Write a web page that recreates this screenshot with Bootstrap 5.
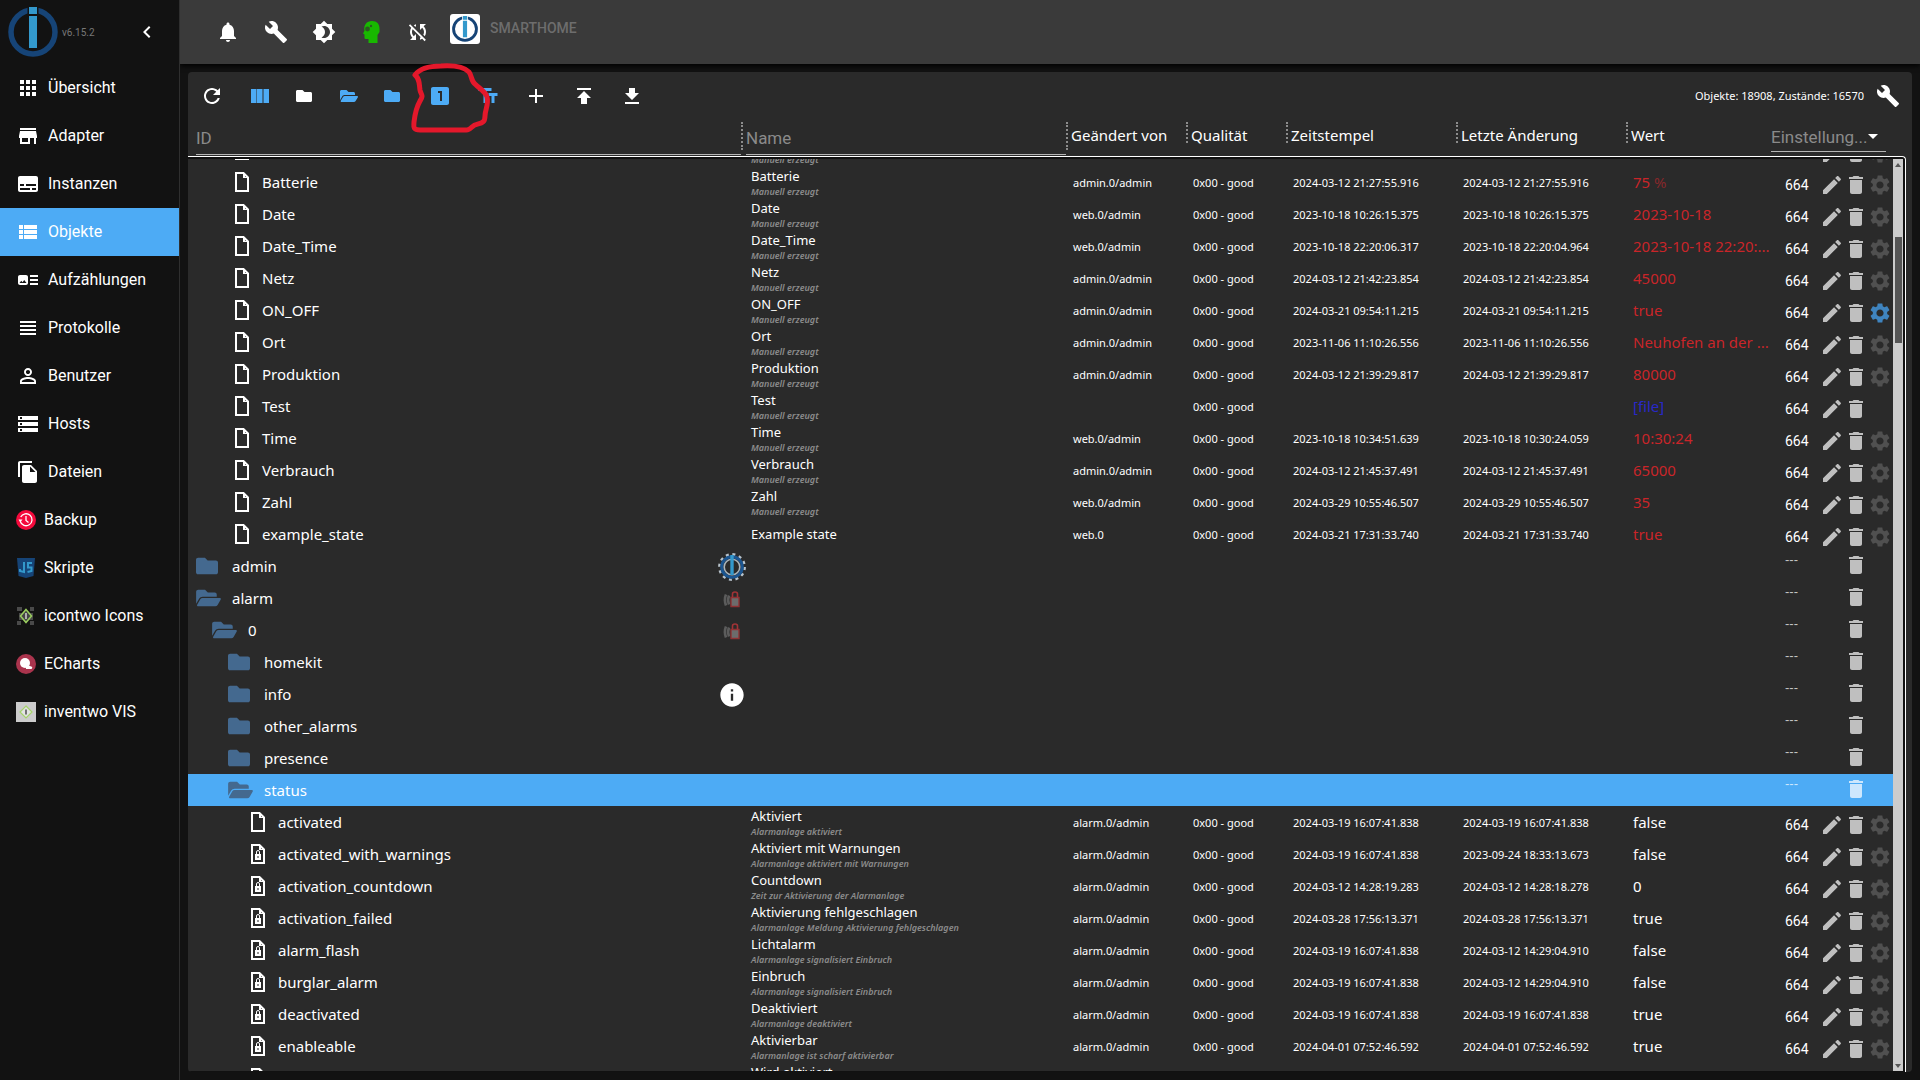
<!DOCTYPE html>
<html lang="de" data-bs-theme="dark">
<head>
<meta charset="utf-8">
<meta name="viewport" content="width=device-width, initial-scale=1">
<title>Objekte - ioBroker</title>
<link href="https://cdn.jsdelivr.net/npm/bootstrap@5.3.0/dist/css/bootstrap.min.css" rel="stylesheet">
<style>
  :root { --accent: #4dabf5; --panel: #2a2a2a; --page: #121212; --dir: #44698f; }
  body { background: var(--page); color: #fff; font-family: Roboto, sans-serif; font-size: 16px; }
  svg { display: block; fill: currentColor; flex: none; }
  .ic { width: 24px; height: 24px; }
  .side { width: 180px; border-right: 1px solid #2f2f2f; }
  .side-head { height: 64px; padding: 0 20px 0 8px; }
  .version { font-size: 10px; color: #777; }
  .side-link { height: 48px; padding: 0 16px; gap: 8px; color: #fff; text-decoration: none; }
  .side-link.active { background: var(--accent); }
  .side-link:hover { color: #fff; }
  .topbar { height: 64px; padding-left: 24px; background: #3a3a3a; box-shadow: 0 2px 5px #000; }
  .tool { width: 48px; height: 48px; padding: 12px; border: 0; border-radius: 50%; background: none; color: #fff; }
  .tool-s { width: 44px; }
  .tool-sync { width: 44px; padding: 12px 10px; }
  .on { color: var(--accent); }
  .host { color: #6d6d6d; font-size: 14px; font-weight: 500; }
  .avatar { background: #fff; border-radius: 3px; margin: 0 10px 6px 10px; padding: 2px; }
  .panel { background: var(--panel); border-radius: 4px; }
  .counts, .grid { font-family: "Noto Sans", sans-serif; }
  .counts { font-size: 11px; }
  .grid { table-layout: fixed; color: #fff; --bs-table-bg: transparent; --bs-table-color: #fff; line-height: 20px; }
  .grid td, .grid th { height: 32px; padding: 0; vertical-align: middle; white-space: nowrap; overflow: hidden; font-weight: 400; }
  .grid-head { width: auto; margin-right: 19px; }
  .grid-head th { height: 36px; vertical-align: top; font-size: 15px; }
  .grid-head th:first-child { padding-left: 8px; }
  .c-id { width: 558px; } .c-by { width: 120px; } .c-q { width: 100px; } .c-t { width: 170px; } .c-v { width: 140px; } .c-s { width: 122px; }
  .grip { width: 2px; height: 21px; margin: 2px 3px 0 0; border-left: 2px dotted #8c8c8c; }
  .grip-l { height: 28px; }
  .cap { display: block; height: 30px; line-height: 30px; }
  .filter { height: 35px; padding: 1px 0 0; border: 0; border-bottom: 1px solid #b5b5b5; border-radius: 0; background: none; color: #fff; font: 17px Roboto, sans-serif; width: 100%; }
  .filter::placeholder { color: #8a8a8a; opacity: 1; }
  .pick { height: 32px; width: 115px; padding: 2px 14px 0 0; border: 0; border-bottom: 1px solid #b5b5b5; border-radius: 0; appearance: none; background: none; color: #8a8a8a; font: 17px Roboto, sans-serif; }
  .pick-arrow { right: 8px; top: 4px; pointer-events: none; }
  .pane { border-top: 1px solid #fff; border-right: 1px solid #fff; border-top-right-radius: 4px; margin-right: 6px; padding: 2px 2px 1px 0; background: #111; }
  .rows { background: var(--panel); overflow: hidden; }
  .bar { width: 10px; background: #ccc; color: #555; padding: 4px 0 3px; }
  .thumb { width: 7px; height: 106px; margin-top: 70px; background: #555; }
  .node { font-size: 15px; }
  .fold { width: 24px; margin-right: 12px; color: var(--dir); }
  .leaf { width: 22px; padding-left: 6px; margin-right: 12px; }
  .badge-ic { width: 28px; padding-top: 1px; }
  .nm { padding-left: 5px; font-size: 13px; line-height: 18px; }
  .nm small { display: block; font-size: 9px; font-style: italic; font-weight: 600; line-height: 14px; color: #8c8c8c; }
  .nm-two { padding-top: 2px; height: 32px; line-height: 17px; }
  .grid td.meta { padding: 1px 0 0 2px; font-size: 11px; }
  .grid td.val { padding-left: 2px; font-size: 15px; }
  .unack { color: #c92529; } .unit { color: #86282b; } .isfile { color: #2828c8; }
  .acts { padding-left: 14px; color: #bfbfbf; }
  .folder .acts { padding-bottom: 2px; }
  .acl { width: 35px; font: 14px/24px Roboto, sans-serif; color: #fff; }
  .acl-none { font: 13px/14px "Liberation Sans", sans-serif; color: #c4c4c4; height: 24px; }
  .act { width: 24px; height: 24px; padding: 0; border: 0; background: none; color: inherit; }
  .state .acts { padding-top: 6px; }
  .dim { color: #505050; } .set { color: #3f84bf; }
  .sel > td { background: var(--accent) !important; }
  .sel .acts, .sel .acl-none { color: #cde7fd; }
  .mark-up { left: 405px; top: 55px; pointer-events: none; }
</style>
<script src="https://cdn.jsdelivr.net/npm/bootstrap@5.3.0/dist/js/bootstrap.bundle.min.js"></script>
</head>
<body class="vh-100 overflow-hidden d-flex position-relative">
<svg class="d-none">
  <symbol id="bell" viewBox="0 0 24 24"><path d="M12 22c1.1 0 2-.9 2-2h-4c0 1.1.89 2 2 2zm6-6v-5c0-3.07-1.64-5.64-4.5-6.32V4c0-.83-.67-1.5-1.5-1.5s-1.5.67-1.5 1.5v.68C7.63 5.36 6 7.92 6 11v5l-2 2v1h16v-1l-2-2z"/></symbol>
  <symbol id="build" viewBox="0 0 24 24"><path d="M22.7 19l-9.1-9.1c.9-2.3.4-5-1.5-6.9-2-2-5-2.4-7.4-1.3L9 6 6 9 1.6 4.7C.4 7.1.9 10.1 2.9 12.1c1.9 1.9 4.6 2.4 6.9 1.5l9.1 9.1c.4.4 1 .4 1.4 0l2.3-2.3c.5-.4.5-1.1.1-1.4z"/></symbol>
  <symbol id="bright" viewBox="0 0 24 24"><path d="M20 8.69V4h-4.69L12 .69 8.69 4H4v4.69L.69 12 4 15.31V20h4.69L12 23.31 15.31 20H20v-4.69L23.31 12 20 8.69zM12 18c-.89 0-1.74-.2-2.5-.55C11.56 16.5 13 14.42 13 12s-1.44-4.5-3.5-5.45C10.26 6.2 11.11 6 12 6c3.31 0 6 2.69 6 6s-2.69 6-6 6z"/></symbol>
  <symbol id="head" viewBox="0 0 24 24"><path fill="#18b800" d="M12 1c5 0 7.500 3 7.500 7.500V12l-2 3v8h-9v-4H5.500c-.8 0-1-.5-1-1.200V14.500L3 13.500l1.500-2.700C3.500 5 6.500 1 12 1z"/><circle cx="7.500" cy="9" r="2.400" fill="#2b5b20"/><circle cx="11" cy="6" r="1.200" fill="#2b5b20"/></symbol>
  <symbol id="syncoff" viewBox="0 0 24 24"><path d="M10 6.35V4.26c-.8.21-1.55.54-2.230.96l1.460 1.460c.25-.12.5-.24.770-.33zm-7.140-.94l2.360 2.360C4.450 8.990 4 10.440 4 12c0 2.210.910 4.200 2.360 5.640L4 20h6v-6l-2.240 2.240C6.680 15.150 6 13.660 6 12c0-1 .25-1.940.680-2.770l8.080 8.080c-.25.130-.5.250-.770.340v2.090c.8-.210 1.550-.540 2.230-.960l2.360 2.360 1.270-1.270L4.140 4.140 2.860 5.410zM20 4h-6v6l2.240-2.240C17.320 8.850 18 10.340 18 12c0 1-.25 1.940-.680 2.770l1.460 1.460C19.550 15.010 20 13.560 20 12c0-2.210-.910-4.200-2.360-5.640L20 4z"/></symbol>
  <symbol id="logo" viewBox="0 0 50 50"><circle cx="25" cy="25" r="22" fill="none" stroke="#164477" stroke-width="5.500"/><path fill="var(--gap, #121212)" d="M19.500 0h11v9h-11z"/><path fill="#3399cc" d="M21 0h8v7h-8zM21 9h8v32h-8z"/></symbol>
  <symbol id="left" viewBox="0 0 24 24"><path d="M15.410 7.410L14 6l-6 6 6 6 1.410-1.410L10.830 12z"/></symbol>
  <symbol id="apps" viewBox="0 0 24 24"><path d="M4 8h4V4H4v4zm6 12h4v-4h-4v4zm-6 0h4v-4H4v4zm0-6h4v-4H4v4zm6 0h4v-4h-4v4zm6-10v4h4V4h-4zm-6 4h4V4h-4v4zm6 6h4v-4h-4v4zm0 6h4v-4h-4v4z"/></symbol>
  <symbol id="store" viewBox="0 0 24 24"><path d="M20 4H4v2h16V4zm1 10v-2l-1-5H4l-1 5v2h1v6h10v-6h4v6h2v-6h1zm-9 4H6v-4h6v4z"/></symbol>
  <symbol id="inst" viewBox="0 0 24 24"><path d="M20 4H4c-1.100 0-2 .9-2 2v12c0 1.100.9 2 2 2h16c1.100 0 2-.9 2-2V6c0-1.100-.9-2-2-2zM4 12h4v2H4v-2zm10 6H4v-2h10v2zm6 0h-4v-2h4v2zm0-4H10v-2h10v2z"/></symbol>
  <symbol id="list" viewBox="0 0 24 24"><path d="M3 14h4v-4H3v4zm0 5h4v-4H3v4zM3 9h4V5H3v4zm5 5h13v-4H8v4zm0 5h13v-4H8v4zM8 5v4h13V5H8z"/></symbol>
  <symbol id="track" viewBox="0 0 24 24"><path d="M22 13h-8v-2h8v2zm0-6h-8v2h8V7zm-8 10h8v-2h-8v2zm-2-8v6c0 1.100-.9 2-2 2H4c-1.100 0-2-.9-2-2V9c0-1.100.9-2 2-2h6c1.100 0 2 .9 2 2zm-1.500 6l-2.250-3-1.750 2.260-1.250-1.510L3.500 15h7z"/></symbol>
  <symbol id="lines" viewBox="0 0 24 24"><path d="M4 15h16v-2H4v2zm0 4h16v-2H4v2zm0-8h16V9H4v2zm0-6v2h16V5H4z"/></symbol>
  <symbol id="person" viewBox="0 0 24 24"><path d="M12 5.900c1.160 0 2.100.94 2.100 2.100s-.94 2.100-2.100 2.100S9.900 9.160 9.900 8s.94-2.100 2.100-2.100m0 9c2.970 0 6.100 1.460 6.100 2.100v1.100H5.900V17c0-.64 3.130-2.100 6.100-2.100M12 4C9.790 4 8 5.790 8 8s1.790 4 4 4 4-1.790 4-4-1.790-4-4-4zm0 9c-2.670 0-8 1.340-8 4v3h16v-3c0-2.660-5.330-4-8-4z"/></symbol>
  <symbol id="hosts" viewBox="0 0 24 24"><path d="M2 20h20v-4H2v4zm2-3h2v2H4v-2zM2 4v4h20V4H2zm4 3H4V5h2v2zm-4 7h20v-4H2v4zm2-3h2v2H4v-2z"/></symbol>
  <symbol id="files" viewBox="0 0 24 24"><path d="M16 1H4c-1.100 0-2 .9-2 2v14h2V3h12V1zm-1 4l6 6v10c0 1.100-.9 2-2 2H7.990C6.890 23 6 22.100 6 21l.01-14c0-1.100.89-2 1.990-2h7zm-1 7h5.500L14 6.500V12z"/></symbol>
  <symbol id="refresh" viewBox="0 0 24 24"><path d="M17.650 6.350C16.200 4.900 14.210 4 12 4c-4.420 0-7.990 3.580-7.990 8s3.570 8 7.990 8c3.730 0 6.840-2.550 7.730-6h-2.080c-.82 2.330-3.040 4-5.650 4-3.310 0-6-2.690-6-6s2.690-6 6-6c1.660 0 3.140.69 4.220 1.780L13 11h7V4l-2.350 2.350z"/></symbol>
  <symbol id="cols" viewBox="0 0 24 24"><path opacity=".5" d="M3 5h18v14H3z"/><path d="M3 5h5v14H3zM9 5h5v14H9zM16 5h5v14h-5z"/></symbol>
  <symbol id="one" viewBox="0 0 24 24"><path d="M19 3H5c-1.100 0-2 .9-2 2v14c0 1.100.9 2 2 2h14c1.100 0 2-.9 2-2V5c0-1.100-.9-2-2-2zm-5 14h-2V9h-2V7h4v10z"/></symbol>
  <symbol id="textf" viewBox="0 0 24 24"><path d="M2.500 4v3h5v12h3V7h5V4h-13zm19 5h-9v3h3v7h3v-7h3V9z"/></symbol>
  <symbol id="plus" viewBox="0 0 24 24"><path d="M19 13h-6v6h-2v-6H5v-2h6V5h2v6h6v2z"/></symbol>
  <symbol id="up" viewBox="0 0 24 24"><path d="M5 4v2h14V4H5zm0 10h4v6h6v-6h4l-7-7-7 7z"/></symbol>
  <symbol id="down" viewBox="0 0 24 24"><path d="M19 9h-4V4H9v5H5l7 7 7-7zM5 18v2h14v-2H5z"/></symbol>
  <symbol id="dir" viewBox="0 0 512 512"><path d="M464 128H272l-64-64H48C21.500 64 0 85.500 0 112v288c0 26.500 21.500 48 48 48h416c26.500 0 48-21.500 48-48V176c0-26.500-21.500-48-48-48z"/></symbol>
  <symbol id="diropen" viewBox="0 0 576 512"><path d="M572.694 292.093L500.270 416.248A63.997 63.997 0 0 1 444.989 448H45.025c-18.523 0-30.064-20.093-20.731-36.093l72.424-124.155A64 64 0 0 1 152 256h399.964c18.523 0 30.064 20.093 20.730 36.093zM152 224h328v-48c0-26.510-21.490-48-48-48H272l-64-64H48C21.490 64 0 85.490 0 112v278.046l69.077-118.418C86.214 242.250 117.989 224 152 224z"/></symbol>
  <symbol id="edit" viewBox="0 0 24 24"><path d="M3 17.250V21h3.750L17.810 9.940l-3.750-3.750L3 17.250zM20.710 7.040c.39-.39.39-1.020 0-1.410l-2.340-2.340c-.39-.39-1.020-.39-1.410 0l-1.830 1.830 3.750 3.750 1.830-1.830z"/></symbol>
  <symbol id="trash" viewBox="0 0 24 24"><path d="M6 19c0 1.100.9 2 2 2h8c1.100 0 2-.9 2-2V7H6v12zM19 4h-3.500l-1-1h-5l-1 1H5v2h14V4z"/></symbol>
  <symbol id="gear" viewBox="0 0 24 24"><path d="M19.140 12.940c.04-.3.06-.61.06-.94 0-.32-.02-.64-.07-.94l2.030-1.580c.18-.14.23-.41.12-.61l-1.920-3.320c-.12-.22-.37-.29-.59-.22l-2.390.96c-.5-.38-1.030-.7-1.620-.94l-.36-2.540c-.04-.24-.24-.41-.48-.41h-3.840c-.24 0-.43.17-.47.41l-.36 2.540c-.59.24-1.130.57-1.620.94l-2.390-.96c-.22-.08-.47 0-.59.22L2.740 8.870c-.12.21-.08.47.12.61l2.030 1.580c-.05.3-.09.63-.09.94s.02.64.07.94l-2.030 1.580c-.18.14-.23.41-.12.61l1.920 3.320c.12.22.37.29.59.22l2.390-.96c.5.38 1.030.7 1.620.94l.36 2.540c.05.24.24.41.48.41h3.840c.24 0 .44-.17.47-.41l.36-2.540c.59-.24 1.130-.56 1.620-.94l2.390.96c.22.08.47 0 .59-.22l1.920-3.320c.12-.22.07-.47-.12-.61l-2.010-1.580zM12 15.600c-1.980 0-3.600-1.620-3.600-3.600s1.620-3.600 3.600-3.600 3.600 1.620 3.600 3.600-1.620 3.600-3.600 3.600z"/></symbol>
  <symbol id="leaf" viewBox="0 0 16 20"><path fill="none" stroke="currentColor" stroke-width="2" d="M2 1h7.500L14 5.500V19H2z"/><path d="M9 1v5h5V5h-3V2z"/></symbol>
  <symbol id="leaflock" viewBox="0 0 16 20"><path fill="none" stroke="currentColor" stroke-width="2" d="M2 1h7.500L14 5.500V19H2z"/><path d="M9 1v5h5V5h-3V2z"/><path d="M5 10h6v6H5z"/><path fill="none" stroke="currentColor" d="M6.500 10V8a1.500 1.500 0 0 1 3 0v2"/><path fill="#2a2a2a" d="M7.500 12h1v2h-1z"/></symbol>
  <symbol id="info" viewBox="0 0 24 24"><path d="M12 2C6.480 2 2 6.480 2 12s4.480 10 10 10 10-4.480 10-10S17.520 2 12 2zm1 15h-2v-6h2v6zm0-8h-2V7h2v2z"/></symbol>
  <symbol id="admin" viewBox="0 0 28 28"><circle cx="14" cy="14" r="12.700" fill="none" stroke="#b9c4cc" stroke-width="2.400" stroke-dasharray="3 3.650"/><circle cx="14" cy="14" r="10.300" fill="none" stroke="#1b5590" stroke-width="3"/><circle cx="14" cy="14" r="7.800" fill="none" stroke="#a9b4bb" stroke-width="1.600"/><path fill="#3399cc" d="M12.300 2h3.400v20h-3.400z"/></symbol>
  <symbol id="alarm" viewBox="0 0 28 28"><path fill="none" stroke="#5c5c5c" stroke-width="2.600" d="M8 9.500q-2.200 5 0 11M11 10.500q-1.800 4.500 0 9"/><path fill="#6c6c6c" stroke="#8e3234" stroke-width="1.400" d="M13 12.500h8v9h-8z"/><path fill="none" stroke="#a23336" stroke-width="1.600" d="M14.500 12.500V9q0-2 2.500-2t2.500 2v3.500"/></symbol>
</svg>

<nav class="side flex-shrink-0 d-flex flex-column">
  <div class="side-head d-flex align-items-center">
    <svg width="50" height="50"><use href="#logo"/></svg>
    <span class="version ms-1">v6.15.2</span>
    <button class="act text-white ms-auto" aria-label="Menü einklappen"><svg class="ic"><use href="#left"/></svg></button>
  </div>
  <a class="side-link d-flex align-items-center" href="#"><svg class="ic"><use href="#apps"/></svg>Übersicht</a>
  <a class="side-link d-flex align-items-center" href="#"><svg class="ic"><use href="#store"/></svg>Adapter</a>
  <a class="side-link d-flex align-items-center" href="#"><svg class="ic"><use href="#inst"/></svg>Instanzen</a>
  <a class="side-link active d-flex align-items-center" href="#" aria-current="page"><svg class="ic"><use href="#list"/></svg>Objekte</a>
  <a class="side-link d-flex align-items-center" href="#"><svg class="ic"><use href="#track"/></svg>Aufzählungen</a>
  <a class="side-link d-flex align-items-center" href="#"><svg class="ic"><use href="#lines"/></svg>Protokolle</a>
  <a class="side-link d-flex align-items-center" href="#"><svg class="ic"><use href="#person"/></svg>Benutzer</a>
  <a class="side-link d-flex align-items-center" href="#"><svg class="ic"><use href="#hosts"/></svg>Hosts</a>
  <a class="side-link d-flex align-items-center" href="#"><svg class="ic"><use href="#files"/></svg>Dateien</a>
  <a class="side-link d-flex align-items-center" href="#"><svg width="20" height="20" viewBox="0 0 20 20"><circle cx="10" cy="10" r="10" fill="#f40a3c"/><path fill="none" stroke="#fff" stroke-width="1.300" d="M4.300 11.500a6 6 0 1 0 .4-4.500M10 6v4.500l2.500 2"/><path fill="#fff" d="M2.500 9.500h4L4.300 12.500z"/></svg>Backup</a>
  <a class="side-link d-flex align-items-center" href="#"><svg width="20" height="20" viewBox="0 0 20 20"><path fill="#164477" d="M1 0h18l-1.500 18L10 20l-7.500-2z"/><path fill="none" stroke="#3399cc" stroke-width="2" d="M8 4v10l-4-1v-2M16 5h-4v4.500h3.500V13l-4 1"/></svg>Skripte</a>
  <a class="side-link d-flex align-items-center" href="#"><svg width="20" height="20" viewBox="0 0 20 20"><path fill="#4a4a4a" d="M1 1h5v4H1zM14 1h4v4h-4zM1 15h4v4H1zM14 15h4v4h-4zM3 7h14v7H3z"/><path fill="#444" stroke="#9bcf5f" stroke-width="1.500" d="M10 3.500l5.500 6.500L10 16.500 4.500 10z"/><path fill="#ddd" d="M9.300 7h1.400v6H9.300z"/></svg>icontwo Icons</a>
  <a class="side-link d-flex align-items-center" href="#"><svg width="20" height="20" viewBox="0 0 20 20"><circle cx="10" cy="10" r="10" fill="#aa344d"/><circle cx="9" cy="9" r="5" fill="#fff"/><path stroke="#fff" stroke-width="2" d="M11 12l5 2M10 14h4"/></svg>ECharts</a>
  <a class="side-link d-flex align-items-center" href="#"><svg width="20" height="20" viewBox="0 0 20 20"><path fill="#ccc" d="M0 0h20v20H0z"/><path fill="#e4e4e4" stroke="#a5d46a" stroke-width="1.200" d="M10 4l6 6-6 6-6-6z"/><path fill="#444" d="M9.300 7.500h1.400v5H9.300z"/></svg>inventwo VIS</a>
</nav>

<div class="flex-grow-1 d-flex flex-column overflow-hidden">
  <header class="topbar flex-shrink-0 d-flex align-items-center">
    <button class="tool" aria-label="Benachrichtigungen"><svg class="ic"><use href="#bell"/></svg></button>
    <button class="tool" aria-label="Systemeinstellungen"><svg class="ic"><use href="#build"/></svg></button>
    <button class="tool" aria-label="Farbschema"><svg class="ic"><use href="#bright"/></svg></button>
    <button class="tool" aria-label="Expertenmodus"><svg class="ic"><use href="#head"/></svg></button>
    <button class="tool tool-sync" aria-label="Synchronisation aus"><svg class="ic"><use href="#syncoff"/></svg></button>
    <span class="avatar" style="--gap:#fff"><svg width="26" height="26"><use href="#logo"/></svg></span>
    <span class="host mb-2">SMARTHOME</span>
  </header>

  <main class="flex-grow-1 p-2 overflow-hidden d-flex">
    <section class="panel flex-grow-1 d-flex flex-column overflow-hidden">
      <div class="d-flex align-items-center flex-shrink-0">
        <button class="tool" aria-label="Aktualisieren"><svg class="ic"><use href="#refresh"/></svg></button>
        <button class="tool on" aria-label="Spalten"><svg class="ic"><use href="#cols"/></svg></button>
        <button class="tool tool-s" aria-label="Alle zuklappen"><svg width="16" height="16"><use href="#dir"/></svg></button>
        <button class="tool tool-s on" aria-label="Alle aufklappen"><svg width="18" height="16"><use href="#diropen"/></svg></button>
        <button class="tool tool-s on" aria-label="Ebene zuklappen"><svg width="16" height="16"><use href="#dir"/></svg></button>
        <button class="tool on" aria-label="Zustände anzeigen"><svg class="ic"><use href="#one"/></svg></button>
        <button class="tool on" aria-label="Beschreibungen"><svg class="ic"><use href="#textf"/></svg></button>
        <button class="tool" aria-label="Hinzufügen"><svg class="ic"><use href="#plus"/></svg></button>
        <button class="tool" aria-label="Hochladen"><svg class="ic"><use href="#up"/></svg></button>
        <button class="tool" aria-label="Herunterladen"><svg class="ic"><use href="#down"/></svg></button>
        <span class="counts ms-auto">Objekte: 18908, Zustände: 16570</span>
        <button class="tool" aria-label="Bearbeiten"><svg class="ic"><use href="#build"/></svg></button>
      </div>

      <div class="grid-head flex-shrink-0">
        <table class="grid w-100">
          <colgroup><col class="c-id"><col><col class="c-by"><col class="c-q"><col class="c-t"><col class="c-t"><col class="c-v"><col class="c-s"></colgroup>
          <thead><tr>
            <th><div class="d-flex"><input class="filter" type="text" placeholder="ID" aria-label="ID"><span class="grip grip-l flex-shrink-0"></span></div></th>
            <th><div class="d-flex"><input class="filter" type="text" placeholder="Name" aria-label="Name"><span class="grip grip-l flex-shrink-0"></span></div></th>
            <th><div class="d-flex justify-content-between"><span class="cap">Geändert von</span><span class="grip"></span></div></th>
            <th><div class="d-flex justify-content-between"><span class="cap">Qualität</span><span class="grip"></span></div></th>
            <th><div class="d-flex justify-content-between"><span class="cap">Zeitstempel</span><span class="grip"></span></div></th>
            <th><div class="d-flex justify-content-between"><span class="cap">Letzte Änderung</span><span class="grip"></span></div></th>
            <th><span class="cap">Wert</span></th>
            <th><div class="position-relative"><select class="pick" aria-label="Einstellungen"><option>Einstellung...</option></select><svg class="ic pick-arrow text-white position-absolute" viewBox="0 0 24 24"><path d="M7 10l5 5 5-5z"/></svg></div></th>
          </tr></thead>
        </table>
      </div>

      <div class="pane flex-grow-1 d-flex overflow-hidden">
        <div class="rows flex-grow-1" id="rows">
          <table class="grid w-100">
            <colgroup><col class="c-id"><col><col class="c-by"><col class="c-q"><col class="c-t"><col class="c-t"><col class="c-v"><col class="c-s"></colgroup>
            <tbody id="tree"></tbody>
          </table>
        </div>
        <div class="bar flex-shrink-0 d-flex flex-column align-items-center">
          <svg width="6" height="4" viewBox="0 0 6 4"><path d="M0 4l3-4 3 4z"/></svg>
          <div class="thumb"></div>
          <svg class="mt-auto" width="6" height="4" viewBox="0 0 6 4"><path d="M0 0l3 4 3-4z"/></svg>
        </div>
      </div>
    </section>
  </main>
</div>

<svg class="mark-up position-absolute" width="90" height="82" viewBox="405 55 90 82"><path fill="none" stroke="#e4182b" stroke-width="5" stroke-linecap="round" stroke-linejoin="round" d="M415 75C420 68 432 66 441 66C456 65 465 68 469 72C472 76 471 81 475 84C480 89 486 92 487 97C489 104 485 110 485 116C485 126 477 122 472 127C468 131 466 130 458 130L420 130C412 130 414 126 414 122C415 113 416 108 420 101C424 95 421 95 420 90C419 84 420 79 415 75"/></svg>

<script>
  // state rows: [level, id, name, description, changed by, timestamp, last change, value, flags]
  // folder rows: [level, id, open, badge icon]
  const M = 'Manuell erzeugt', A = 'admin.0/admin', W = 'web.0/admin', L = 'alarm.0/admin';
  const data = [
    [2, '', '', M, '', '', '', '', 'u'],
    [2, 'Batterie', 'Batterie', M, A, '2024-03-12 21:27:55.916', '', '75 <span class="unit">%</span>', 'u'],
    [2, 'Date', 'Date', M, W, '2023-10-18 10:26:15.375', '', '2023-10-18', 'u'],
    [2, 'Date_Time', 'Date_Time', M, W, '2023-10-18 22:20:06.317', '2023-10-18 22:20:04.964', '2023-10-18 22:20:...', 'u'],
    [2, 'Netz', 'Netz', M, A, '2024-03-12 21:42:23.854', '', '45000', 'u'],
    [2, 'ON_OFF', 'ON_OFF', M, A, '2024-03-21 09:54:11.215', '', 'true', 'ug'],
    [2, 'Ort', 'Ort', M, A, '2023-11-06 11:10:26.556', '', 'Neuhofen an der ...', 'u'],
    [2, 'Produktion', 'Produktion', M, A, '2024-03-12 21:39:29.817', '', '80000', 'u'],
    [2, 'Test', 'Test', M, '', '', '', '[file]', 'f'],
    [2, 'Time', 'Time', M, W, '2023-10-18 10:34:51.639', '2023-10-18 10:30:24.059', '10:30:24', 'u'],
    [2, 'Verbrauch', 'Verbrauch', M, A, '2024-03-12 21:45:37.491', '', '65000', 'u'],
    [2, 'Zahl', 'Zahl', M, W, '2024-03-29 10:55:46.507', '', '35', 'u'],
    [2, 'example_state', 'Example state', '', 'web.0', '2024-03-21 17:31:33.740', '', 'true', 'u'],
    [0, 'admin', false, 'admin'],
    [0, 'alarm', true, 'alarm'],
    [1, '0', true, 'alarm'],
    [2, 'homekit', false, ''],
    [2, 'info', false, 'info'],
    [2, 'other_alarms', false, ''],
    [2, 'presence', false, ''],
    [2, 'status', true, ''],
    [3, 'activated', 'Aktiviert', 'Alarmanlage aktiviert', L, '2024-03-19 16:07:41.838', '', 'false', ''],
    [3, 'activated_with_warnings', 'Aktiviert mit Warnungen', 'Alarmanlage aktiviert mit Warnungen', L, '2024-03-19 16:07:41.838', '2023-09-24 18:33:13.673', 'false', 'r'],
    [3, 'activation_countdown', 'Countdown', 'Zeit zur Aktivierung der Alarmanlage', L, '2024-03-12 14:28:19.283', '2024-03-12 14:28:18.278', '0', 'r'],
    [3, 'activation_failed', 'Aktivierung fehlgeschlagen', 'Alarmanlage Meldung Aktivierung fehlgeschlagen', L, '2024-03-28 17:56:13.371', '', 'true', 'r'],
    [3, 'alarm_flash', 'Lichtalarm', 'Alarmanlage signalisiert Einbruch', L, '2024-03-19 16:07:41.838', '2024-03-12 14:29:04.910', 'false', 'r'],
    [3, 'burglar_alarm', 'Einbruch', 'Alarmanlage signalisiert Einbruch', L, '2024-03-19 16:07:41.838', '2024-03-12 14:29:04.910', 'false', 'r'],
    [3, 'deactivated', 'Deaktiviert', 'Alarmanlage deaktiviert', L, '2024-03-19 16:07:41.838', '', 'true', 'r'],
    [3, 'enableable', 'Aktivierbar', 'Alarmanlage ist scharf aktivierbar', L, '2024-04-01 07:52:46.592', '', 'true', 'r'],
    [3, '', 'Wird aktiviert', '&nbsp;', '', '', '', '', 'r']
  ];
  const use = (id, w, h) => `<svg width="${w}" height="${h}"><use href="#${id}"/></svg>`;
  const act = (id, label, cls = '') => `<button class="act ${cls}" aria-label="${label}">${use(id, 24, 24)}</button>`;
  const indent = level => `style="padding-left:${8 + 16 * level}px"`;
  const folder = ([lv, id, open, icon]) => `<tr class="folder ${id === 'status' ? 'sel' : ''}">
    <td><div class="node d-flex align-items-center" ${indent(lv)}><span class="fold">${open ? use('diropen', 25, 22) : use('dir', 22, 22)}</span>${id}
    <span class="badge-ic ms-auto">${icon ? use(icon, 28, 28) : ''}</span></div></td>
    <td></td><td></td><td></td><td></td><td></td><td></td>
    <td><div class="acts d-flex"><span class="acl acl-none">---</span><span class="act"></span>${act('trash', 'Löschen')}</div></td></tr>`;
  const state = ([lv, id, name, desc, by, ts, lc, val, fl]) => `<tr class="state">
    <td><div class="node d-flex align-items-center" ${indent(lv)}><span class="leaf">${use(fl.includes('r') ? 'leaflock' : 'leaf', 16, 20)}</span>${id}</div></td>
    <td><div class="nm ${desc ? 'nm-two' : ''}">${name || '&nbsp;'}${desc ? `<small>${desc}</small>` : ''}</div></td>
    <td class="meta">${by}</td><td class="meta">${id ? '0x00 - good' : ''}</td><td class="meta">${ts}</td><td class="meta">${lc || ts}</td>
    <td class="val ${fl.includes('u') ? 'unack' : fl.includes('f') ? 'isfile' : ''}">${val}</td>
    <td><div class="acts d-flex">${id ? '<span class="acl">664</span>' : '<span class="acl"></span>'}${act('edit', 'Bearbeiten')}${act('trash', 'Löschen')}${fl.includes('f') ? '' : act('gear', 'Einstellungen', fl.includes('g') ? 'set' : 'dim')}</div></td></tr>`;
  document.getElementById('tree').innerHTML = data.map(r => r.length === 4 ? folder(r) : state(r)).join('');
  document.getElementById('rows').scrollTop = 25;
</script>
</body>
</html>
